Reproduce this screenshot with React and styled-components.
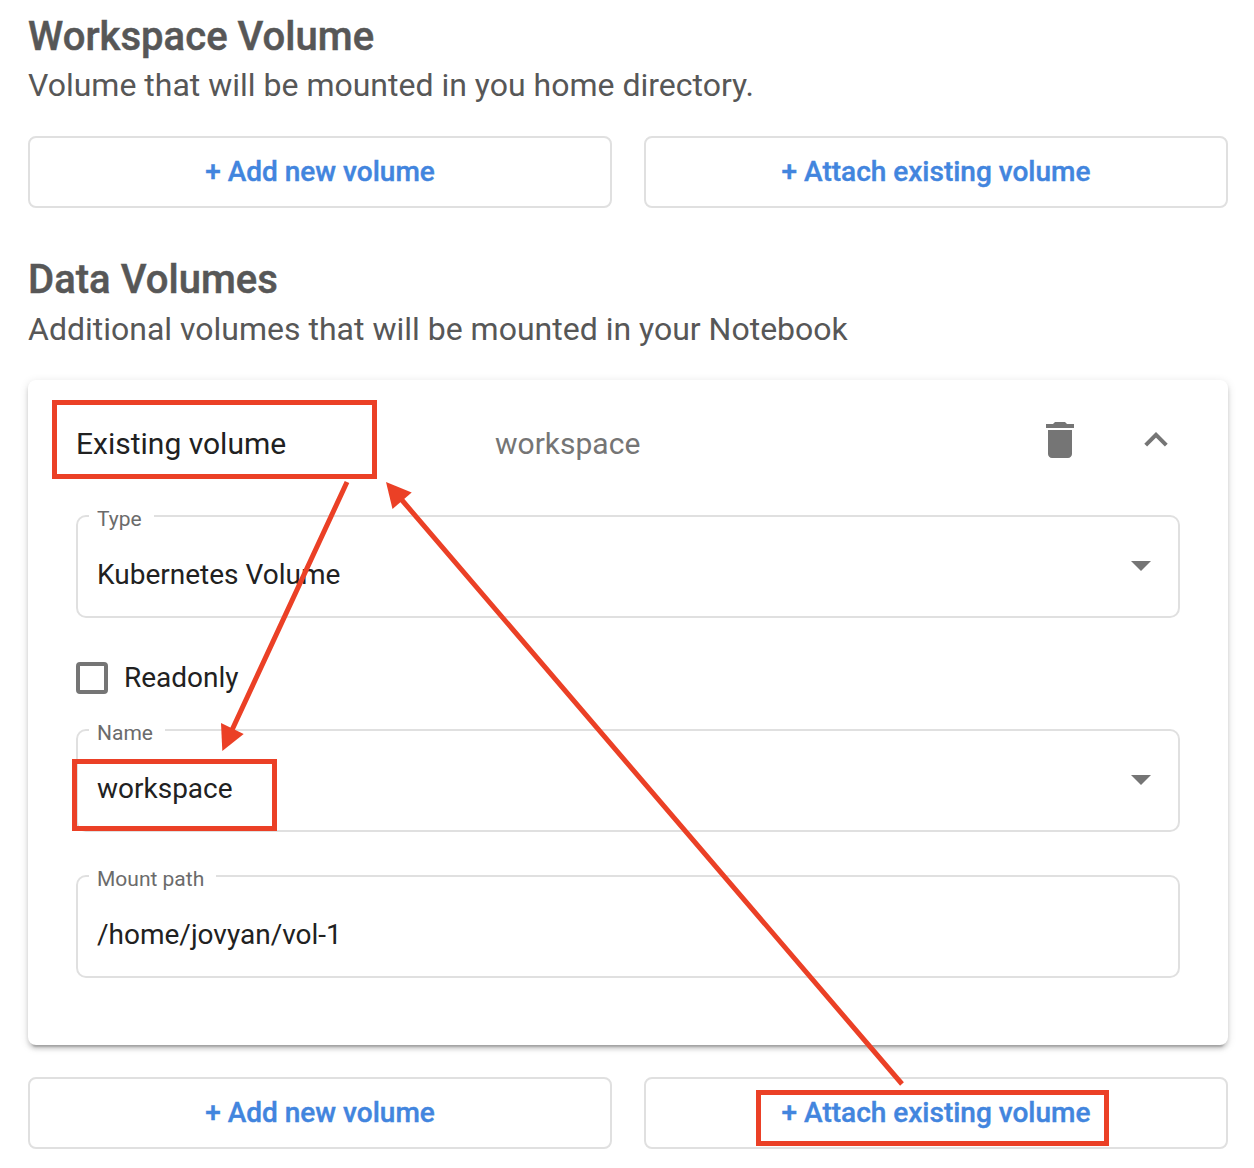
import React from "react";
import styled, { createGlobalStyle } from "styled-components";

const Global = createGlobalStyle`
  body { margin: 0; background: #fff; overflow: hidden; font-family: Roboto, "Liberation Sans", sans-serif; }
  * { box-sizing: border-box; }
`;

const Page = styled.main`
  position: relative;
  display: flex;
  flex-direction: column;
  height: 1168px;
  padding: 13px 26px 0 28px;
`;

const Section = styled.section`
  display: flex;
  flex-direction: column;
  margin-bottom: ${(p) => p.$gap || 0}px;
`;

const Title = styled.h3`
  margin: 0;
  font-size: 40px;
  line-height: 48px;
  font-weight: 500;
  color: #575757;
  letter-spacing: 0.04px;
  -webkit-text-stroke: 0.5px #575757;
`;

const Subtitle = styled.p`
  margin: 0 0 ${(p) => p.$gap}px;
  font-size: 32px;
  line-height: ${(p) => p.$line}px;
  color: #575757;
  white-space: nowrap;
`;

const ButtonRow = styled.div`
  display: grid;
  grid-template-columns: 584px 584px;
  gap: 32px;
`;

const VolumeButton = styled.button`
  height: 72px;
  padding: 0 0 2px;
  border: 2px solid #e0e0e0;
  border-radius: 8px;
  background: #fff;
  color: #4285de;
  font: 500 28px/68px Roboto, "Liberation Sans", sans-serif;
  -webkit-text-stroke: 0.4px #4285de;
`;

const Card = styled.div`
  width: 1200px;
  height: 665px;
  margin-bottom: 32px;
  padding: 0 48px;
  border-radius: 8px;
  background: #fff;
  box-shadow: 0 6px 2px -4px rgba(0, 0, 0, 0.2), 0 4px 4px 0 rgba(0, 0, 0, 0.14), 0 2px 10px 0 rgba(0, 0, 0, 0.12);
`;

const CardHeader = styled.div`
  display: grid;
  grid-template-columns: 419px 1fr 48px 96px;
  align-items: center;
  height: 124px;
  padding-top: 4px;
  font-size: 30px;
  line-height: 40px;
  color: #212121;
`;

const Summary = styled.span`
  color: #757575;
`;

const TrashIcon = styled.svg`
  width: 48px;
  height: 48px;
  margin-bottom: 8px;
  fill: #757575;
`;

const Chevron = styled.svg`
  width: 24px;
  height: 16px;
  margin: 0 0 8px 60px;
  fill: none;
  stroke: #757575;
  stroke-width: 4;
`;

const Field = styled.fieldset`
  display: block;
  min-width: 0;
  height: 114px;
  margin: 0 0 ${(p) => p.$gap || 0}px;
  padding: 0 27px 0 11px;
  border: 2px solid #e0e0e0;
  border-radius: 10px;
`;

const Label = styled.legend`
  height: 24px;
  padding: 0 12px 0 8px;
  font-size: 21px;
  line-height: 31px;
  color: #6b6b6b;
`;

const Value = styled.div`
  display: flex;
  align-items: center;
  justify-content: space-between;
  height: 76px;
  padding-left: 8px;
  font-size: 28px;
  line-height: 40px;
  color: #212121;
`;

const ValueText = styled.span`
  padding-top: 17px;
`;

const Caret = styled.svg`
  width: 20px;
  height: 10px;
  fill: #757575;
`;

const CheckRow = styled.label`
  display: flex;
  align-items: center;
  gap: 16px;
  height: 32px;
  margin-bottom: 24px;
  font-size: 28px;
  color: #212121;
`;

const CheckText = styled.span`
  padding-bottom: 2px;
`;

const CheckBox = styled.span`
  width: 32px;
  height: 32px;
  border: 4px solid #757575;
  border-radius: 4px;
`;

const Annotations = styled.svg`
  position: absolute;
  top: 0;
  left: 0;
  width: 1254px;
  height: 1168px;
  pointer-events: none;
  fill: none;
  stroke: #eb4026;
  stroke-width: 5;
`;

const ArrowHead = styled.polygon`
  fill: #eb4026;
  stroke: none;
`;

function VolumeActions() {
  return (
    <ButtonRow>
      <VolumeButton>+ Add new volume</VolumeButton>
      <VolumeButton>+ Attach existing volume</VolumeButton>
    </ButtonRow>
  );
}

function FormField({ label, value, select, gap }) {
  return (
    <Field $gap={gap}>
      <Label>{label}</Label>
      <Value>
        <ValueText>{value}</ValueText>
        {select && (
          <Caret viewBox="0 0 20 10">
            <path d="M0 0h20L10 10z" />
          </Caret>
        )}
      </Value>
    </Field>
  );
}

export default function App() {
  return (
    <>
      <Global />
      <Page>
        <Section $gap={48}>
          <Title>Workspace Volume</Title>
          <Subtitle $line={48} $gap={27}>Volume that will be mounted in you home directory.</Subtitle>
          <VolumeActions />
        </Section>
        <Section>
          <Title>Data Volumes</Title>
          <Subtitle $line={50} $gap={26}>Additional volumes that will be mounted in your Notebook</Subtitle>
          <Card>
            <CardHeader>
              <span>Existing volume</span>
              <Summary>workspace</Summary>
              <TrashIcon viewBox="0 0 24 24">
                <path d="M6 19c0 1.1.9 2 2 2h8c1.1 0 2-.9 2-2V7H6v12zM19 4h-3.5l-1-1h-5l-1 1H5v2h14V4z" />
              </TrashIcon>
              <Chevron viewBox="0 0 24 16">
                <path d="M1.7 13.1L12 2.8l10.3 10.3" />
              </Chevron>
            </CardHeader>
            <FormField label="Type" value="Kubernetes Volume" select gap={44} />
            <CheckRow>
              <CheckBox />
              <CheckText>Readonly</CheckText>
            </CheckRow>
            <FormField label="Name" value="workspace" select gap={32} />
            <FormField label="Mount path" value="/home/jovyan/vol-1" />
          </Card>
          <VolumeActions />
        </Section>
        <Annotations viewBox="0 0 1254 1168">
          <rect x="54.5" y="402.5" width="320" height="74" />
          <rect x="74.5" y="761.5" width="200" height="67" />
          <rect x="758.5" y="1092.5" width="348" height="51" />
          <path d="M347 482L232 730M902 1084L401 499" />
          <ArrowHead points="222.3,751 221,723 243.7,734" />
          <ArrowHead points="386,482 411.7,492.5 392.5,509" />
        </Annotations>
      </Page>
    </>
  );
}
